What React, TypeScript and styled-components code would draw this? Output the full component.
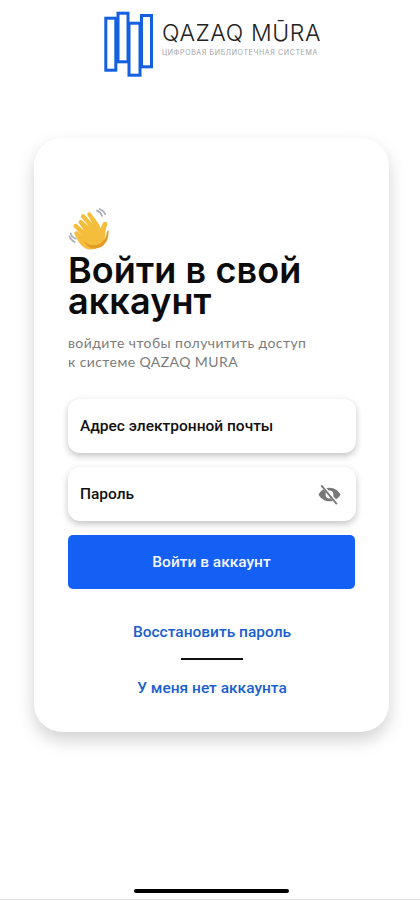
import React from "react";
import styled, { createGlobalStyle } from "styled-components";

const Global = createGlobalStyle`
  html, body { margin: 0; padding: 0; background: #fff; }
  * { box-sizing: border-box; }
`;

const Page = styled.div`
  width: 420px;
  height: 900px;
  background: #fff;
  display: flex;
  flex-direction: column;
  overflow: hidden;
`;

const Brand = styled.header`
  display: flex;
  align-items: flex-start;
  height: 138px;
  padding: 11px 0 0 103px;
  gap: 8px;
`;

const BrandText = styled.div`
  display: flex;
  flex-direction: column;
  padding-top: 9px;
`;

const BrandName = styled.div`
  font: 300 23px/27px "Inter", "Liberation Sans", sans-serif;
  color: #222;
  letter-spacing: 0.6px;
  white-space: nowrap;
`;

const BrandTag = styled.div`
  font: 400 7px/9px "Inter", "Liberation Sans", sans-serif;
  color: #a3a3a3;
  letter-spacing: 0.64px;
  white-space: nowrap;
  margin-top: 1px;
`;

const Card = styled.main`
  width: 355px;
  height: 594px;
  margin-left: 34px;
  padding: 70px 33px 0 34px;
  background: #fff;
  border-radius: 28px;
  box-shadow: 0 8px 17px rgba(0, 0, 0, 0.18);
  display: flex;
  flex-direction: column;
`;

const Title = styled.h1`
  margin: 5px 0 0;
  font: 600 36px/31px "Inter", "Liberation Sans", sans-serif;
  color: #0b0b0b;
  letter-spacing: 0.1px;
`;

const Subtitle = styled.p`
  margin: 16px 0 0;
  font: 400 14px/19px "Lato", "Liberation Sans", sans-serif;
  color: #7b7b7b;
  letter-spacing: 0.42px;
`;

const Fields = styled.div`
  display: flex;
  flex-direction: column;
  gap: 14px;
  margin-top: 28px;
`;

const Field = styled.div`
  height: 54px;
  padding: 0 15px 0 12px;
  background: #fff;
  border-radius: 12px;
  box-shadow: 0 3px 7px rgba(0, 0, 0, 0.24);
  display: flex;
  align-items: center;
  justify-content: space-between;
  font: 500 15.5px/18px "Roboto", "Liberation Sans", sans-serif;
  color: #111;
`;

const Submit = styled.button`
  height: 54px;
  width: 287px;
  border: 0;
  border-radius: 5px;
  background: #1460f5;
  color: #f4f7ff;
  font: 500 15.5px/18px "Roboto", "Liberation Sans", sans-serif;
  padding: 0;
`;

const Links = styled.nav`
  display: flex;
  flex-direction: column;
  align-items: center;
  margin-top: 33px;
`;

const LinkText = styled.a`
  font: 500 15.5px/20px "Roboto", "Liberation Sans", sans-serif;
  color: #1a5fd0;
`;

const Divider = styled.div`
  width: 62px;
  height: 2px;
  background: #111;
  margin: 16px 0 18px;
`;

const HomeIndicator = styled.div`
  width: 155px;
  height: 4px;
  border-radius: 2px;
  background: #000;
  margin: 157px 0 0 134px;
`;

const BaseLine = styled.div`
  height: 1px;
  margin-top: 6px;
  background: #e4e4e4;
`;

const Logo = () => (
  <svg width="51" height="67" viewBox="0 0 51 67" fill="#fff" stroke="#1460e0" strokeWidth="3">
    <rect x="2.800" y="7.200" width="10" height="52" />
    <rect x="15" y="2.200" width="10" height="48.600" />
    <rect x="38.500" y="4.500" width="10" height="51.300" />
    <rect x="26" y="12.200" width="11" height="52" />
  </svg>
);

const Wave = () => (
  <svg width="44" height="42" viewBox="0 0 41 40">
    <g fill="none" stroke="#a9b0b8" strokeWidth="1.6" strokeLinecap="round">
      <path d="M27 2.500c2.500.8 4 2.300 5 5" />
      <path d="M29.500 1c2.500.8 4.500 2.500 5.500 5" />
      <path d="M2 24c.8 2.600 2.300 4.300 5 5.200" />
      <path d="M1 27c.8 2.600 2.500 4.400 5 5.400" />
    </g>
    <path
      fill="#f4bd3c"
      d="M10 14.500c-1.300-1.800 1-4 2.800-2.800l7 6.500-7.400-9.200c-1.500-2 1.200-4.200 3-2.500l7.800 8.700-5-8.200c-1.300-2.200 1.800-4 3.300-2l7 9.800c1.200 1.700 1.600 3 1.800 4.500l2.400-4.800c1.300-2.600 5-1 4.200 1.500-1.300 4-2 6.500-2 10 0 7-5 13.500-13 13.500-5.500 0-9-3-12-7L6 25.500c-1.500-1.900 1-4.300 2.800-2.800l4.500 3.900-8-8.200c-1.700-1.900 1-4.400 2.900-2.800l7 6z"
    />
    <path
      fill="#e59a26"
      d="M36.500 22.500c-.3 7-5.300 13-12.500 13-4 0-7-1.500-10-4.500 3 5 6.500 7.500 11 7.500 8 0 12.800-6.500 13-13.500l.3-4z"
    />
  </svg>
);

const EyeOff = () => (
  <svg width="23" height="21" viewBox="0 0 25 23">
    <path
      fill="#777"
      fillRule="evenodd"
      d="M12.500 4C7 4 2.500 7.300.5 11.500 2.500 15.700 7 19 12.500 19S22.500 15.700 24.500 11.500C22.500 7.300 18 4 12.500 4zm0 3.200a4.300 4.300 0 1 1 0 8.600 4.300 4.300 0 0 1 0-8.600z"
    />
    <path d="M4 1l17.500 21" stroke="#fff" strokeWidth="3.600" />
    <path d="M3.500 1.500L20.500 22" stroke="#777" strokeWidth="2" />
  </svg>
);

export default function App() {
  return (
    <Page>
      <Global />
      <Brand>
        <Logo />
        <BrandText>
          <BrandName>QAZAQ MŪRA</BrandName>
          <BrandTag>ЦИФРОВАЯ БИБЛИОТЕЧНАЯ СИСТЕМА</BrandTag>
        </BrandText>
      </Brand>
      <Card>
        <Wave />
        <Title>
          Войти в свой
          <br />
          аккаунт
        </Title>
        <Subtitle>
          войдите чтобы получитить доступ
          <br />к системе QAZAQ MURA
        </Subtitle>
        <Fields>
          <Field>Адрес электронной почты</Field>
          <Field>
            Пароль
            <EyeOff />
          </Field>
          <Submit>Войти в аккаунт</Submit>
        </Fields>
        <Links>
          <LinkText>Восстановить пароль</LinkText>
          <Divider />
          <LinkText>У меня нет аккаунта</LinkText>
        </Links>
      </Card>
      <HomeIndicator />
      <BaseLine />
    </Page>
  );
}
